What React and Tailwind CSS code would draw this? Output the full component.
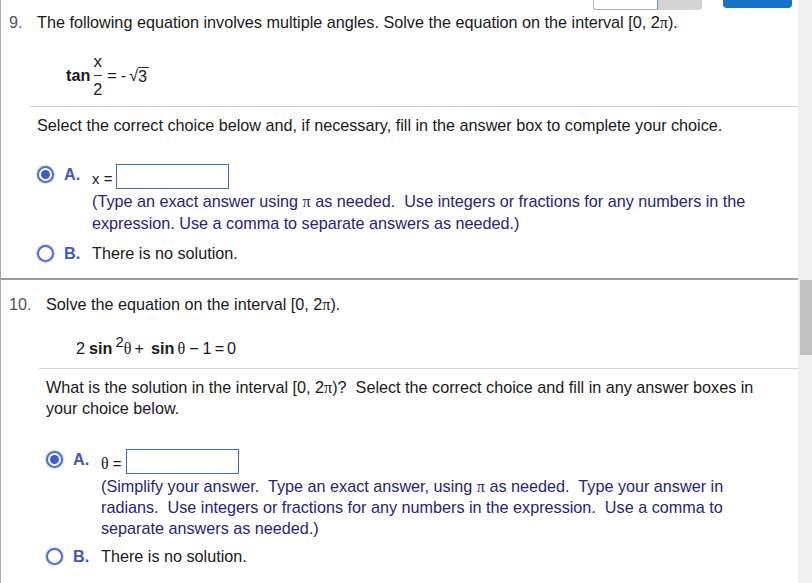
const Radio = ({ checked }) => (
  <span className="flex h-[17px] w-[17px] items-center justify-center rounded-full border-2 border-[#4f6fd6] bg-white shadow-[0_0_1px_1px_rgba(79,111,214,0.3)]">
    {checked && <span className="h-[9px] w-[9px] rounded-full bg-[#3d5ccf]" />}
  </span>
);

const Choice = ({ letter, checked, children }) => (
  <div className="flex">
    <div className="flex h-[20px] w-[27px] items-center">
      <Radio checked={checked} />
    </div>
    <div className="w-[28px] font-bold leading-[20px] text-[#3f56c5]">{letter}.</div>
    <div className="flex-1">{children}</div>
  </div>
);

const Pi = () => <span className="font-['Liberation_Serif',serif] leading-none">π</span>;

const Theta = ({ className = '' }) => (
  <span className={`font-['Liberation_Serif',serif] leading-none ${className}`}>θ</span>
);

const AnswerBox = () => <span className="block h-[25px] w-[113px] border border-[#3b6ccc] bg-white" />;

export default function App() {
  return (
    <div className="flex h-[583px] w-[812px] overflow-hidden bg-white font-['Liberation_Sans',Arial,sans-serif] text-[16.2px] leading-[21px] text-[#1a1a1a]">
      <main className="flex-1 border-l border-[#a8a8a8]">
        {/* header remnants scrolled off the top */}
        <div className="flex h-[10px] items-start justify-end overflow-hidden pr-[6px]">
          <div className="flex">
            <div className="h-[10px] w-[65px] rounded-bl-[3px] border border-t-0 border-[#b0b0b0] border-r-[#5a8fd8] bg-white" />
            <div className="h-[10px] w-[44px] rounded-br-[4px] bg-[#d4d4d4]" />
          </div>
          <div className="ml-[21px] h-[8px] w-[69px] rounded-b-[4px] bg-[#1572c9]" />
        </div>

        {/* question 9 */}
        <section className="mt-[2px] flex pl-[8px]">
          <span className="w-[28px] text-[#555]">9.</span>
          <div className="flex-1">
            <p>
              The following equation involves multiple angles. Solve the equation on the interval [0, 2<Pi />).
            </p>
            <div className="ml-[29px] mt-[20px] flex h-[45px] items-center">
              <span className="font-bold">tan</span>
              <span className="ml-[3px] flex flex-col items-center">
                <span className="pb-[4px] text-[17px] leading-[18px]">x</span>
                <span className="h-px w-[8px] bg-[#333]" />
                <span className="pt-[4px] leading-[18px]">2</span>
              </span>
              <span className="ml-[5px]">=</span>
              <span className="ml-[4px]">-</span>
              <span className="ml-[3px]">√</span>
              <span className="border-t border-[#333] pr-[2px] leading-[16px]">3</span>
            </div>
            <div className="-ml-[7px] mt-[8px] h-px bg-[#cdd1dc]" />
            <p className="mt-[8px]">
              Select the correct choice below and, if necessary, fill in the answer box to complete your choice.
            </p>
            <div className="mt-[28px]">
              <Choice letter="A" checked>
                <div className="flex h-[25px] items-center">
                  <span className="pt-[3px] text-[15px]">x =</span>
                  <span className="ml-[4px]">
                    <AnswerBox />
                  </span>
                </div>
                <div className="mt-[1px] whitespace-pre leading-[22px] text-[#28247c]">
                  <div>(Type an exact answer using <Pi /> as needed.  Use integers or fractions for any numbers in the</div>
                  <div>expression. Use a comma to separate answers as needed.)</div>
                </div>
              </Choice>
            </div>
            <div className="mt-[9px]">
              <Choice letter="B">
                <div className="leading-[20px]">There is no solution.</div>
              </Choice>
            </div>
          </div>
        </section>

        <div className="mt-[15px] h-[2px] bg-[#9c9c9c]" />

        {/* question 10 */}
        <section className="mt-[14px] flex pl-[8px]">
          <span className="w-[37px] text-[#555]">10.</span>
          <div className="flex-1">
            <p>Solve the equation on the interval [0, 2<Pi />).</p>
            <p className="ml-[30px] mt-[23px] whitespace-nowrap">
              2<span className="ml-[4px] font-bold">sin</span>
              <sup className="ml-[3px] text-[15px]">2</sup>
              <Theta />
              <span className="ml-[3px]">+</span>
              <span className="ml-[7px] font-bold">sin</span>
              <Theta className="ml-[3px]" />
              <span className="ml-[4px]">−</span>
              <span className="ml-[4px]">1</span>
              <span className="ml-[3px]">=</span>
              <span className="ml-[3px]">0</span>
            </p>
            <div className="-ml-[7px] mt-[9px] h-px bg-[#cdd1dc]" />
            <div className="mt-[8px] whitespace-pre">
              <div>What is the solution in the interval [0, 2<Pi />)?  Select the correct choice and fill in any answer boxes in</div>
              <div>your choice below.</div>
            </div>
            <div className="mt-[30px]">
              <Choice letter="A" checked>
                <div className="flex h-[25px] items-center">
                  <span className="pt-[3px] text-[15px]">
                    <Theta className="text-[16px]" /> =
                  </span>
                  <span className="ml-[4px]">
                    <AnswerBox />
                  </span>
                </div>
                <div className="mt-[2px] whitespace-pre text-[#28247c]">
                  <div>(Simplify your answer.  Type an exact answer, using <Pi /> as needed.  Type your answer in</div>
                  <div>radians.  Use integers or fractions for any numbers in the expression.  Use a comma to</div>
                  <div>separate answers as needed.)</div>
                </div>
              </Choice>
            </div>
            <div className="mt-[7px]">
              <Choice letter="B">
                <div className="leading-[20px]">There is no solution.</div>
              </Choice>
            </div>
          </div>
        </section>
      </main>

      {/* scrollbar */}
      <div className="w-[14px] bg-[#f0f0f0] pt-[280px]">
        <div className="ml-[2px] h-[75px] w-[12px] bg-[#c1c1c1]" />
      </div>
    </div>
  );
}
